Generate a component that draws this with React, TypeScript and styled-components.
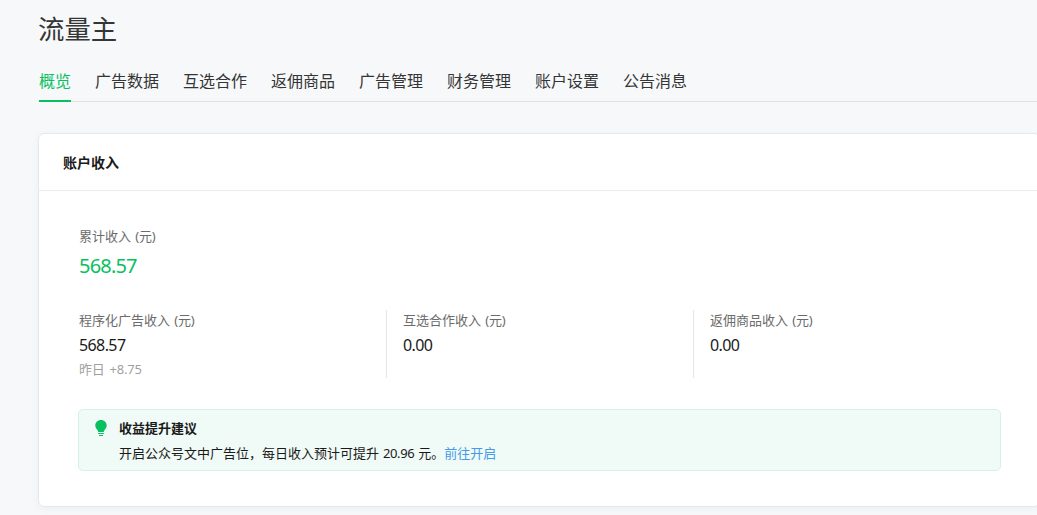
import React from "react";
import styled, { createGlobalStyle } from "styled-components";

const GlobalStyle = createGlobalStyle`
  * { box-sizing: border-box; }
  html, body { margin: 0; padding: 0; background: #f7f8fa; overflow: hidden; }
  body { font-family: "Noto Sans", "Noto Sans CJK SC", sans-serif; color: #353535; }
`;

const Page = styled.main`
  width: 1037px;
  height: 515px;
  padding: 9px 0 0 38px;
  overflow: hidden;
  background: #f7f8fa;
`;

const Title = styled.h1`
  margin: 0;
  height: 40px;
  font-size: 26.4px;
  font-weight: 400;
  line-height: 40px;
  white-space: nowrap;
`;

const Tabs = styled.nav`
  display: flex;
  gap: 24px;
  height: 53px;
  padding-left: 1px;
  border-bottom: 1px solid #e0e1e3;
`;

const Tab = styled.a<{ $active?: boolean }>`
  flex: none;
  height: 53px;
  padding-top: 20px;
  font-size: 16px;
  line-height: 24px;
  white-space: nowrap;
  color: ${(p) => (p.$active ? "#07c160" : "#353535")};
  border-bottom: 2px solid ${(p) => (p.$active ? "#07c160" : "transparent")};
`;

const Card = styled.section`
  width: 1002px;
  height: 374px;
  margin-top: 31px;
  background: #fff;
  border: 1px solid #e7e8eb;
  border-radius: 6px;
  box-shadow: 0 2px 10px rgba(0, 0, 0, 0.04);
`;

const CardHeader = styled.h2`
  margin: 0;
  height: 57px;
  padding: 1px 24px 0;
  border-bottom: 1px solid #ebebeb;
  font-size: 14px;
  font-weight: 700;
  line-height: 56px;
  color: #1a1a1a;
`;

const CardBody = styled.div`
  padding: 35px 39px 0;
`;

const Label = styled.div`
  height: 22px;
  font-size: 13px;
  line-height: 21px;
  white-space: nowrap;
  color: #6b6b6b;
`;

const Unit = styled.span`
  letter-spacing: -0.15px;
  word-spacing: 1px;
`;

const Total = styled.div`
  padding-left: 1px;
`;

const TotalValue = styled.div`
  height: 36px;
  font-size: 20px;
  line-height: 36px;
  letter-spacing: -0.8px;
  color: #07c160;
`;

const Columns = styled.div`
  display: flex;
  height: 68px;
  margin-top: 26px;
`;

const Column = styled.div<{ $first?: boolean }>`
  width: ${(p) => (p.$first ? "308px" : "307px")};
  padding-left: ${(p) => (p.$first ? "1px" : "16px")};
  border-left: ${(p) => (p.$first ? "0" : "1px solid #e7e7e7")};
`;

const Value = styled.div`
  height: 26px;
  font-size: 16px;
  line-height: 26px;
  letter-spacing: -0.6px;
  color: #1a1a1a;
`;

const Note = styled.div`
  height: 22px;
  font-size: 13px;
  line-height: 22px;
  letter-spacing: -0.15px;
  word-spacing: 1.5px;
  color: #9f9f9f;
`;

const Tip = styled.aside`
  display: flex;
  width: 923px;
  height: 62px;
  margin-top: 31px;
  padding: 7px 0 0 16px;
  background: #f0faf6;
  border: 1px solid #d5f3e3;
  border-radius: 5px;
`;

const BulbIcon = styled.svg`
  flex: none;
  width: 12px;
  height: 18px;
  margin: 2px 12px 0 0;
  fill: #07c160;
`;

const TipTitle = styled.div`
  height: 24px;
  font-size: 13px;
  font-weight: 700;
  line-height: 23px;
  color: #1a1a1a;
`;

const TipText = styled.div`
  height: 24px;
  font-size: 13px;
  line-height: 24px;
  white-space: nowrap;
  color: #1a1a1a;
`;

const Amount = styled.span`
  letter-spacing: -0.4px;
  word-spacing: 1px;
`;

const Link = styled.a`
  color: #459ae9;
`;

const tabs = ["概览", "广告数据", "互选合作", "返佣商品", "广告管理", "财务管理", "账户设置", "公告消息"];

const incomes = [
  { label: "程序化广告收入", value: "568.57", note: "昨日 +8.75" },
  { label: "互选合作收入", value: "0.00" },
  { label: "返佣商品收入", value: "0.00" },
];

export default function App() {
  return (
    <Page lang="zh-CN">
      <GlobalStyle />
      <Title>流量主</Title>
      <Tabs>
        {tabs.map((name, i) => (
          <Tab key={name} $active={i === 0}>{name}</Tab>
        ))}
      </Tabs>
      <Card>
        <CardHeader>账户收入</CardHeader>
        <CardBody>
          <Total>
            <Label>累计收入<Unit> (元)</Unit></Label>
            <TotalValue>568.57</TotalValue>
          </Total>
          <Columns>
            {incomes.map((item, i) => (
              <Column key={item.label} $first={i === 0}>
                <Label>{item.label}<Unit> (元)</Unit></Label>
                <Value>{item.value}</Value>
                {item.note && <Note>{item.note}</Note>}
              </Column>
            ))}
          </Columns>
          <Tip>
            <BulbIcon viewBox="0 0 12 18">
              <path d="M6 1C2.800 1 .3 3.400.3 6.500c0 2.200 1.300 3.700 2.300 4.700.4.500.6 1 .6 1.800h5.600c0-.8.200-1.300.6-1.800 1-1 2.300-2.500 2.300-4.700C11.700 3.400 9.200 1 6 1z" />
              <path d="M3.200 14h5.600v1H3.200zM4 16h4v1H4z" />
            </BulbIcon>
            <div>
              <TipTitle>收益提升建议</TipTitle>
              <TipText>
                开启公众号文中广告位，每日收入预计可提升<Amount> 20.96 </Amount>元。<Link>前往开启</Link>
              </TipText>
            </div>
          </Tip>
        </CardBody>
      </Card>
    </Page>
  );
}
